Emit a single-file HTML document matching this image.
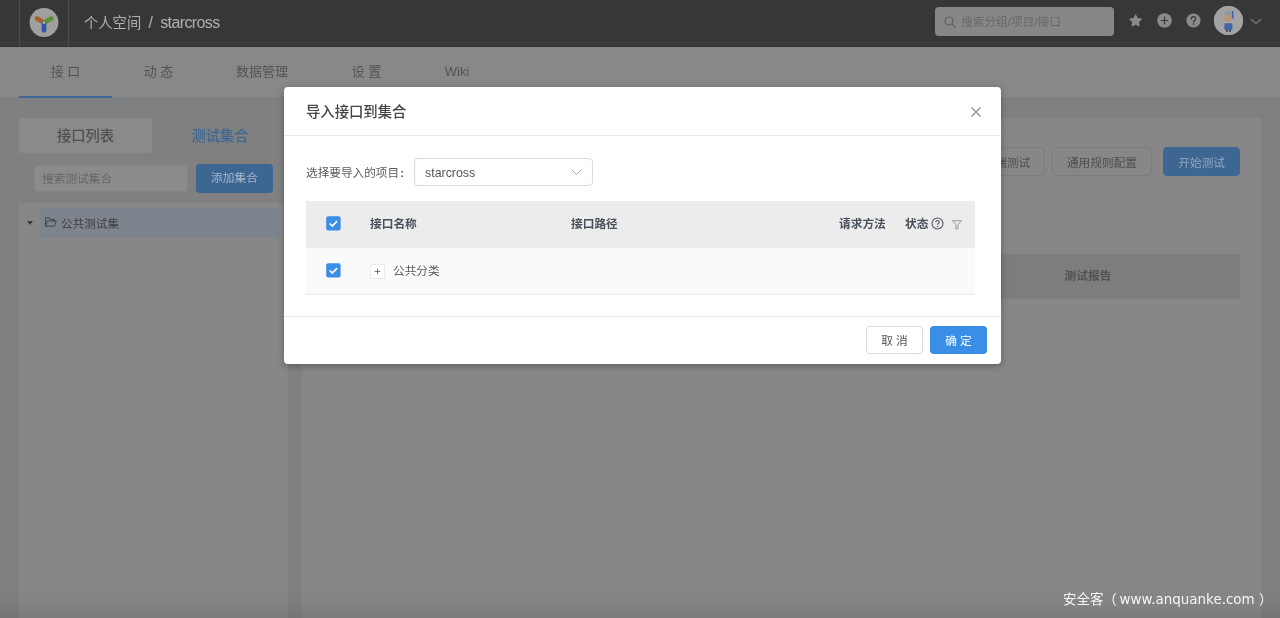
<!DOCTYPE html>
<html lang="zh-CN">
<head>
<meta charset="utf-8">
<title>YApi - 导入接口到集合</title>
<style>
*{box-sizing:border-box;margin:0;padding:0}
html,body{width:1280px;height:618px;overflow:hidden}
body{position:relative;background:#7f8082;font-family:"Liberation Sans","Noto Sans CJK SC",sans-serif;font-size:12px;color:rgba(0,0,0,.65);line-height:1}
.abs{position:absolute}
.t,.th,.gb,#bcancel,#bok,#lp .btn{will-change:transform}
.t{position:absolute;white-space:nowrap;line-height:20px;height:20px}
svg{position:absolute;overflow:visible}

/* ---------- page behind the modal (colours already dimmed by the mask) ---------- */
#hdr{left:0;top:0;width:1280px;height:47px;background:#363739}
#hdr .vl{top:0;width:1px;height:47px;background:#4b4c4e}
#logo{left:29px;top:8px;width:30px;height:30px}
#crumb{left:83.5px;top:12.8px;font-size:14.3px;color:#b0b0b0}
#crumb b{font-weight:400;font-size:16px;letter-spacing:-.62px}
#crumb .sl{display:inline-block;width:19px;text-align:center;font-size:16px}
#srch{left:935px;top:7px;width:179px;height:29px;border-radius:4px;background:#878787}
#srch .t{left:26px;top:4.8px;font-size:11.7px;color:#686868}
#avatar{left:1214.3px;top:6.2px;width:29px;height:29px;border-radius:50%;background:#a3a3a3;overflow:hidden}

#nav{left:0;top:47px;width:1280px;height:50px;background:#888}
#nav .t{top:15px;font-size:13px;color:#545454;text-align:center}
#nav .ul{left:19px;top:49px;width:93px;height:2px;background:#3f6894}

#lp{left:19px;top:118px;width:269px;height:500px;background:#878787}
#lp .tab1{left:0;top:0;width:133px;height:35px;background:#8a8a8a;border-radius:2px}
#lp .tab2{left:133px;top:0;width:136px;height:35px;background:#808080}
#lp .flt{left:0;top:34px;width:269px;height:51px;background:#808080}
#lp .inp{left:15px;top:46.5px;width:154px;height:27.5px;background:#8b8b8b;border:1px solid #858585;border-radius:4px}
#lp .btn{left:177px;top:46px;width:77px;height:28.5px;background:#3d6693;border-radius:4px;color:#a9b6c6;text-align:center;line-height:28.2px;font-size:11.7px}
#lp .row{left:21px;top:90px;width:239px;height:30px;background:#7d848e}

#rp{left:302px;top:118px;width:959px;height:500px;background:#878787}
.gb{position:absolute;height:28.6px;border:1px solid #7c7c7c;border-radius:4px;background:#878787;text-align:center;line-height:29px;font-size:11.7px;color:#4e4e4e;white-space:nowrap}
.gb.pri{background:#3d6693;border-color:#3d6693;color:#93a6bc}
#rp .th{left:20px;top:136px;width:918px;height:44.600px;background:#7d7d7d}

/* ---------- modal ---------- */
#modal{left:284px;top:87px;width:717px;height:276.5px;background:#fff;border-radius:4px;box-shadow:0 2px 7px rgba(0,0,0,.3)}
#modal .hl{left:0;width:717px;height:1px;background:#e9e9e9}
#mtitle{left:22px;top:14.5px;font-size:14.35px;font-weight:500;color:#444}
#sel{left:130px;top:71px;width:179px;height:28px;border:1px solid #d9d9d9;border-radius:4px;background:#fff}
#thead{left:22px;top:114px;width:669px;height:47px;background:#ececec}
#trow{left:22px;top:161px;width:669px;height:46.6px;background:#fafafa;border-bottom:1px solid #ebebeb}
.cb{position:absolute;width:14.6px;height:14.6px;border-radius:2px;background:#3a8ee6}
.th{position:absolute;white-space:nowrap;font-weight:700;font-size:11.7px;color:#48505b;line-height:20px}
#exp{left:86px;top:177px;width:15px;height:15px;border:1px solid #ebebeb;background:#fff}
#bcancel{left:582px;top:239.4px;width:57px;height:28px;border:1px solid #d9d9d9;border-radius:4px;background:#fff;text-align:center;line-height:28.4px;color:#555;font-size:11.7px}
#bok{left:646px;top:239.4px;width:57px;height:28px;border-radius:4px;background:#3a8ee6;text-align:center;line-height:30.4px;color:#fff;font-size:11.7px}

#btm{left:0;top:584px;width:1280px;height:34px;background:linear-gradient(to bottom,rgba(0,0,0,0) 0%,rgba(0,0,0,.025) 55%,rgba(0,0,0,.09) 100%)}
#wm{right:7.5px;top:589.2px;font-size:13.45px;color:rgba(255,255,255,.93);line-height:22px;font-family:"DejaVu Sans","Noto Sans CJK SC",sans-serif}
</style>
</head>
<body>

<!-- header -->
<div id="hdr" class="abs">
  <div class="abs" style="left:0;top:41px;width:1280px;height:4.500px;background:#3b3c3e"></div>
  <div class="abs" style="left:0;top:45.500px;width:1280px;height:1.500px;background:#2f3032"></div>
  <div class="abs vl" style="left:19px"></div>
  <div class="abs vl" style="left:68px"></div>
  <div id="logo" class="abs">
    <svg width="30" height="30" viewBox="0 0 30 30" style="left:0;top:0">
      <circle cx="15" cy="14.500" r="14.400" fill="#a0a0a0"/>
      <line x1="15" y1="14.800" x2="8.100" y2="10.400" stroke="#a56231" stroke-width="4.700" stroke-linecap="round"/>
      <line x1="15" y1="14.800" x2="22.400" y2="10.400" stroke="#5d8f38" stroke-width="4.700" stroke-linecap="round"/>
      <line x1="15" y1="16.200" x2="15" y2="22.300" stroke="#3454a6" stroke-width="4.700" stroke-linecap="round"/>
      <circle cx="15" cy="14.700" r="1.300" fill="#b4b4b4"/>
    </svg>
  </div>
  <div id="crumb" class="t">个人空间<span class="sl">/</span><b>starcross</b></div>
  <div id="srch" class="abs">
    <svg width="12" height="12" viewBox="0 0 12 12" style="left:9px;top:9px"><circle cx="5" cy="5" r="4" fill="none" stroke="#5e5e5e" stroke-width="1.2"/><line x1="8" y1="8" x2="11" y2="11" stroke="#5e5e5e" stroke-width="1.2" stroke-linecap="round"/></svg>
    <div class="t">搜索分组/项目/接口</div>
  </div>
  <!-- star -->
  <svg width="13.2" height="13.2" viewBox="0 0 24 24" style="left:1129.3px;top:13.8px"><path d="M12 2.2l3 6.3 6.9 1-5 4.8 1.2 6.9L12 17.9l-6.1 3.3 1.2-6.9-5-4.8 6.9-1z" fill="#8a8a8a" stroke="#8a8a8a" stroke-width="2.6" stroke-linejoin="round"/></svg>
  <!-- plus circle -->
  <svg width="15" height="15" viewBox="0 0 15 15" style="left:1156.7px;top:13px"><circle cx="7.5" cy="7.5" r="7.3" fill="#8a8a8a"/><path d="M7.5 3.8v7.4M3.8 7.5h7.4" stroke="#353738" stroke-width="1.2" fill="none"/></svg>
  <!-- question circle -->
  <svg width="15" height="15" viewBox="0 0 15 15" style="left:1185.6px;top:13.1px"><circle cx="7.5" cy="7.5" r="7.1" fill="#8a8a8a"/><path d="M5.3 5.9c0-1.4 1-2.2 2.2-2.2s2.2.8 2.2 2c0 1.5-2.1 1.6-2.1 3.3" stroke="#353738" stroke-width="1.2" fill="none" stroke-linecap="round"/><circle cx="7.55" cy="11" r=".8" fill="#353738"/></svg>
  <div id="avatar" class="abs">
    <svg width="29" height="29" viewBox="0 0 29 29" style="left:0;top:0">
      <rect width="29" height="29" fill="#a3a3a3"/>
      <path d="M10.2 9.2c0-3 1.6-4.6 4-4.6s3.8 1.4 3.8 4.4z" fill="#8e9aa3"/>
      <ellipse cx="13.9" cy="12.3" rx="3.9" ry="3.7" fill="#b39779"/>
      <rect x="17.9" y="5" width="1.6" height="7.6" fill="#3f66a6"/>
      <path d="M11.6 17.2h5.6c.8 0 1.2.5 1.2 1.2v5.400h-8v-5.400c0-.7.400-1.200 1.200-1.200z" fill="#3f66a6"/>
      <rect x="12" y="23.600" width="2" height="2.200" fill="#39485f"/><rect x="15" y="23.600" width="2" height="2.200" fill="#39485f"/>
    </svg>
  </div>
  <svg width="12" height="7" viewBox="0 0 12 7" style="left:1250px;top:18px"><path d="M.9.900L6 5.700 11.100.900" fill="none" stroke="#727374" stroke-width="1.400"/></svg>
</div>

<!-- sub nav -->
<div id="nav" class="abs">
  <div class="t" style="left:19px;width:93px">接 口</div>
  <div class="t" style="left:112px;width:93px">动 态</div>
  <div class="t" style="left:205px;width:114px">数据管理</div>
  <div class="t" style="left:320px;width:93px">设 置</div>
  <div class="t" style="left:412px;width:90px">Wiki</div>
  <div class="abs ul"></div>
</div>

<!-- left panel -->
<div id="lp" class="abs">
  <div class="abs tab2"></div>
  <div class="abs flt"></div>
  <div class="abs tab1"></div>
  <div class="t" style="left:0;top:8px;width:133px;text-align:center;font-size:14.3px;font-weight:500;color:#505050">接口列表</div>
  <div class="t" style="left:133px;top:8px;width:136px;text-align:center;font-size:14.3px;font-weight:500;color:#3e6793">测试集合</div>
  <div class="abs inp"><div class="t" style="left:7.3px;top:3.6px;font-size:11.7px;color:#666">搜索测试集合</div></div>
  <div class="abs btn">添加集合</div>
  <div class="abs row"></div>
  <svg width="6" height="4" viewBox="0 0 6 4" style="left:7.6px;top:102.8px"><path d="M0 0h6L3 4z" fill="#3c3c3c"/></svg>
  <svg width="12" height="10" viewBox="0 0 12 10" style="left:25.6px;top:99px"><path d="M.6 9.2V.8h3.4l1.2 1.5h4.2v1.6M.6 9.2l1.8-5.3h8.8L9.4 9.2z" fill="none" stroke="#444" stroke-width="1" stroke-linejoin="round"/></svg>
  <div class="t" style="left:42.2px;top:95.6px;font-size:11.6px;color:#3e3e3e">公共测试集</div>
</div>

<!-- right panel -->
<div id="rp" class="abs">
  <div class="gb" style="left:655px;top:28.7px;width:88px">服务端测试</div>
  <div class="gb" style="left:750px;top:28.7px;width:100px">通用规则配置</div>
  <div class="gb pri" style="left:860.5px;top:28.7px;width:77.3px">开始测试</div>
  <div class="abs th"></div>
  <div class="t" style="left:746px;top:148px;width:80px;text-align:center;font-size:11.7px;font-weight:700;color:#525252">测试报告</div>
</div>

<!-- modal -->
<div id="modal" class="abs">
  <div id="mtitle" class="t">导入接口到集合</div>
  <svg width="10" height="10" viewBox="0 0 10 10" style="left:687px;top:20px"><path d="M.5.5l9 9M9.5.5l-9 9" stroke="#8c8c8c" stroke-width="1.1" fill="none"/></svg>
  <div class="abs hl" style="top:48px"></div>

  <div class="t" style="left:22px;top:76.2px;font-size:11.65px;color:#5c5c5c">选择要导入的项目<span style="margin-left:1.2px;font-weight:700">:</span></div>
  <div id="sel" class="abs">
    <div class="t" style="left:9.6px;top:3.8px;font-size:12.4px;color:#555">starcross</div>
    <svg width="11" height="6.5" viewBox="0 0 11 6.5" style="left:156.3px;top:10.3px"><path d="M.6.6L5.5 5.6 10.4.6" fill="none" stroke="#a6a6a6" stroke-width="1"/></svg>
  </div>

  <div id="thead" class="abs"></div>
  <div id="trow" class="abs"></div>
  <svg class="cbx" width="15" height="15" viewBox="0 0 15 15" style="left:42px;top:129.3px"><rect x=".2" y=".2" width="14.4" height="14.3" rx="2" fill="#3a8ee6"/><path d="M3.7 7.5l2.6 2.6 4.8-5" fill="none" stroke="#fff" stroke-width="1.7"/></svg>
  <svg class="cbx" width="15" height="15" viewBox="0 0 15 15" style="left:42px;top:176.4px"><rect x=".2" y=".2" width="14.4" height="14.3" rx="2" fill="#3a8ee6"/><path d="M3.7 7.5l2.6 2.6 4.8-5" fill="none" stroke="#fff" stroke-width="1.7"/></svg>
  <div class="th" style="left:86px;top:127px">接口名称</div>
  <div class="th" style="left:287px;top:127px">接口路径</div>
  <div class="th" style="left:554.6px;top:127px">请求方法</div>
  <div class="th" style="left:621px;top:127px">状态</div>
  <svg width="13" height="13" viewBox="0 0 13 13" style="left:646.6px;top:130.3px"><circle cx="6.5" cy="6.5" r="5.5" fill="none" stroke="#4d545e" stroke-width="1.05"/><path d="M4.7 5.3c0-1.1.8-1.8 1.8-1.8s1.8.7 1.8 1.7c0 1.2-1.7 1.4-1.7 2.6" stroke="#4d545e" stroke-width="1.05" fill="none"/><circle cx="6.55" cy="9.5" r=".7" fill="#4d545e"/></svg>
  <svg width="10" height="10" viewBox="0 0 10 10" style="left:668px;top:132.5px"><path d="M.6.7h8.8L6 4.8v3.6L4 9.4V4.8z" fill="none" stroke="#999" stroke-width="1" stroke-linejoin="round"/></svg>

  <div id="exp" class="abs"><svg width="13" height="13" viewBox="0 0 13 13" style="left:0;top:0"><path d="M3.7 6.5h5.6M6.5 3.7v5.6" stroke="#606060" stroke-width=".85" fill="none"/></svg></div>
  <div class="t" style="left:108.6px;top:174.4px;font-size:11.65px;color:#5a5a5a">公共分类</div>

  <div class="abs hl" style="top:229px"></div>
  <div id="bcancel" class="abs">取 消</div>
  <div id="bok" class="abs">确 定</div>
</div>

<div id="btm" class="abs"></div>
<div id="wm" class="t">安全客（<span style="margin-left:2.8px">www.anquanke.com</span> ）</div>

</body>
</html>
